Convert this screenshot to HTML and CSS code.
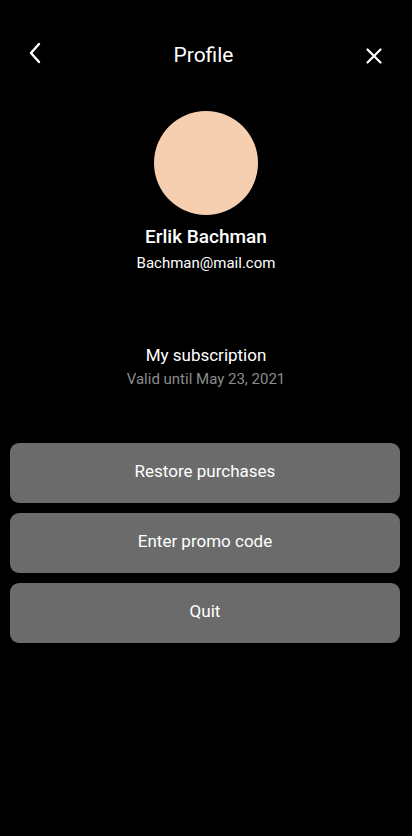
FILE: index.html
```html
<!DOCTYPE html>
<html>
<head>
<meta charset="utf-8">
<link rel="stylesheet" href="styles.css">
</head>
<body>
<div class="screen">
  <header class="topbar">
    <button class="icon-btn back" aria-label="Back">
      <svg width="14" height="22" viewBox="0 0 14 22"><path d="M11 2 L3 11 L11 20" fill="none" stroke="#fff" stroke-width="2.4" stroke-linecap="round" stroke-linejoin="round"/></svg>
    </button>
    <h1 class="title">Profile</h1>
    <button class="icon-btn close" aria-label="Close">
      <svg width="18" height="18" viewBox="0 0 18 18"><path d="M2.5 2.5 L15.5 15.5 M15.5 2.5 L2.5 15.5" fill="none" stroke="#fff" stroke-width="2.2" stroke-linecap="round"/></svg>
    </button>
  </header>
  <section class="user">
    <div class="avatar"></div>
    <div class="name">Erlik Bachman</div>
    <div class="email">Bachman@mail.com</div>
  </section>
  <section class="subscription">
    <div class="sub-title">My subscription</div>
    <div class="sub-valid">Valid until May 23, 2021</div>
  </section>
  <section class="actions">
    <button class="action">Restore purchases</button>
    <button class="action">Enter promo code</button>
    <button class="action">Quit</button>
  </section>
</div>
</body>
</html>
```
FILE: styles.css
```css
* { box-sizing: border-box; }
html, body { margin: 0; padding: 0; background: #000; }
body { font-family: Roboto, "Noto Sans", sans-serif; color: #fff; }
.screen { width: 412px; min-height: 836px; background: #000; }
.topbar {
  height: 110px;
  display: flex;
  align-items: flex-start;
  justify-content: space-between;
  padding: 0 29px 0 28px;
}
.icon-btn { background: none; border: 0; padding: 0; display: flex; }
.back { margin-top: 42px; }
.close { margin-top: 47px; }
.title {
  margin: 42px 0 0;
  font-size: 21px;
  font-weight: 400;
  line-height: 26px;
  flex: 1;
  text-align: center;
}
.user { display: flex; flex-direction: column; align-items: center; }
.avatar { width: 104px; height: 104px; border-radius: 50%; background: #f6cfb0; margin-top: 1px; }
.name { margin-top: 11px; font-size: 19px; font-weight: 500; line-height: 22px; }
.email { margin-top: 6px; font-size: 15px; line-height: 18px; }
.subscription { margin-top: 73px; display: flex; flex-direction: column; align-items: center; }
.sub-title { font-size: 17px; line-height: 20px; }
.sub-valid { margin-top: 5px; font-size: 15px; line-height: 18px; color: #8c8c8c; }
.actions { margin-top: 55px; padding: 0 12px 0 10px; display: flex; flex-direction: column; gap: 10px; }
.action {
  height: 60px;
  border: 0;
  border-radius: 9px;
  background: #6b6b6b;
  color: #fff;
  font-family: Roboto, "Noto Sans", sans-serif;
  font-size: 17px;
  font-weight: 400;
  padding: 0 0 4px;
}
```
